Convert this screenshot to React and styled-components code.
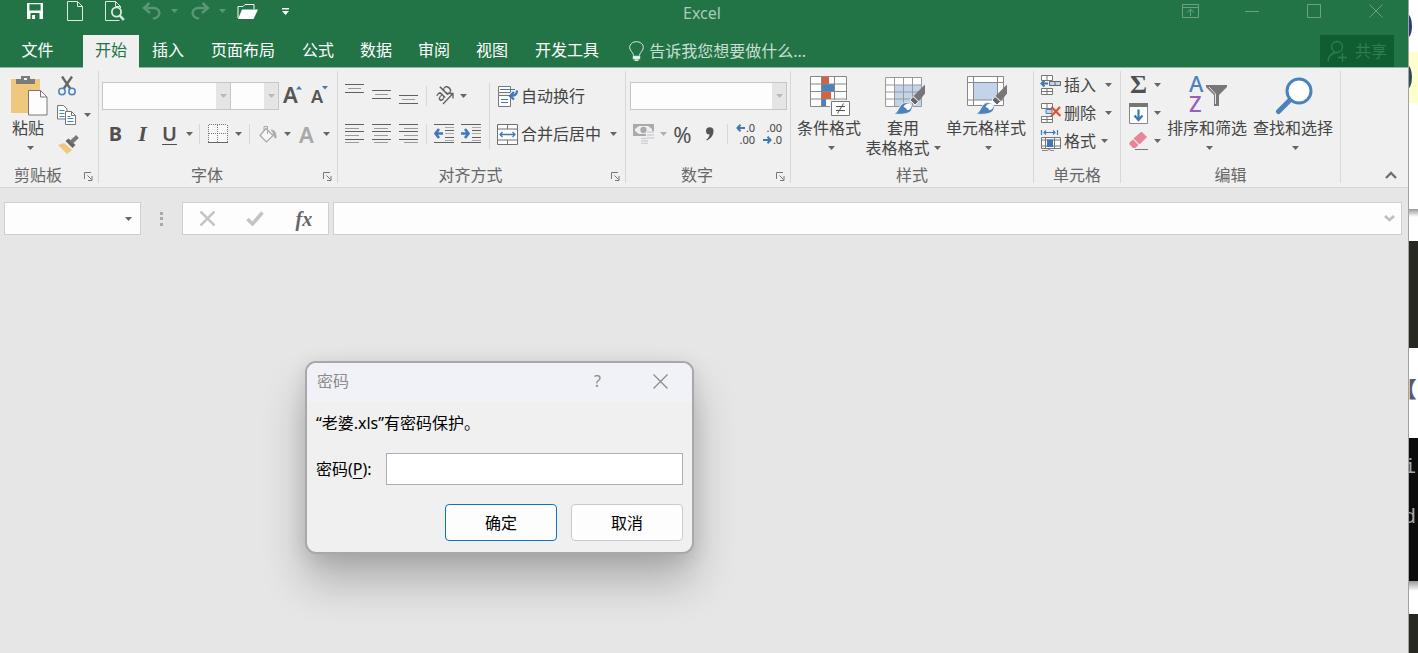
import React from "react";
import styled, { createGlobalStyle, css } from "styled-components";

const FONT = '"Noto Sans", "Noto Sans CJK SC", sans-serif';

const Global = createGlobalStyle`
  *, *::before, *::after { box-sizing: border-box; }
  body { margin: 0; overflow: hidden; font-family: ${FONT}; font-size: 16px; line-height: 20px; color: #444; background: #fff; }
  button, input { font: inherit; color: inherit; }
  svg { display: block; flex: none; }
`;

const Desktop = styled.div`
  position: relative;
  display: flex;
  min-height: 100vh;
`;

const Window = styled.div`
  flex: 1;
  min-width: 0;
  display: flex;
  flex-direction: column;
  background: #e6e6e6;
  border-right: 1px solid #a3a3a3;
`;

const PlainButton = styled.button`
  display: flex;
  align-items: center;
  justify-content: center;
  padding: 0;
  border: 0;
  background: none;
  white-space: nowrap;
`;

/* ---------- title bar and tabs ---------- */

const Header = styled.header`
  background: #227447;
  color: #fff;
  border-bottom: 1px solid #8fb8a0;
`;

const TitleBar = styled.div`
  display: grid;
  grid-template-columns: 1fr auto 1fr;
  height: 35px;
`;

const QuickAccess = styled.div`
  display: flex;
  height: 24px;
  padding-left: 15px;
`;

const QuickButton = styled(PlainButton)`
  width: ${(p) => p.$w || 40}px;
  height: 22px;
  color: #fff;
  opacity: ${(p) => (p.$dim ? 0.25 : 1)};
`;

const UndoPair = styled.div`
  display: flex;
  margin-right: ${(p) => p.$gap || 0}px;
`;

const AppTitle = styled.h1`
  margin: 0;
  padding-right: 4px;
  font-size: 16px;
  font-weight: 400;
  line-height: 26px;
  color: #a9cbb7;
`;

const WindowControls = styled.div`
  display: flex;
  justify-content: flex-end;
  padding-right: 1px;
`;

const ControlButton = styled(PlainButton)`
  width: 62px;
  height: 22px;
  color: #6ba284;
`;

const TabRow = styled.nav`
  display: flex;
  height: 32px;
`;

const Tab = styled(PlainButton)`
  padding: 0 ${(p) => (p.$wide ? 14 : 13)}px 2px;
  color: #fff;
  ${(p) => p.$file && css`width: 75px; margin-right: 8px;`}
  ${(p) => p.$active && css`
    padding: 0 12px 3px;
    color: #227447;
    background: #f0f0f0;
    margin-bottom: -1px;
  `}
`;

const TellMe = styled(PlainButton)`
  margin-left: 16px;
  gap: 5px;
  color: #c9dfd2;
`;

const Share = styled(PlainButton)`
  width: 74px;
  gap: 7px;
  margin-left: auto;
  margin-right: 14px;
  color: #2c7f54;
  background: #105d31;
`;

/* ---------- ribbon ---------- */

const Ribbon = styled.section`
  display: flex;
  padding: 3px 0 4px;
  background: #f0f0f0;
  border-bottom: 1px solid #d4d4d4;
`;

const GroupBox = styled.div`
  display: flex;
  flex-direction: column;
  flex: none;
  width: ${(p) => p.$w}px;
  border-right: 1px solid #d8d8d8;
`;

const GroupBody = styled.div`
  display: flex;
  height: 94px;
  padding-left: ${(p) => p.$pad || 0}px;
`;

const GroupFoot = styled.div`
  display: flex;
  align-items: center;
  height: 20px;
  margin-bottom: -2px;
  color: #666;
`;

const GroupName = styled.span`
  flex: 1;
  text-align: center;
`;

const Launcher = styled(PlainButton)`
  width: 22px;
  height: 20px;
  padding: 2px 0 0 2px;
`;

const BigButton = styled.button`
  display: flex;
  flex-direction: column;
  align-items: center;
  width: ${(p) => p.$w}px;
  padding: 3px 0 0;
  border: 0;
  background: none;
  white-space: nowrap;
`;

const BigIcon = styled.span`
  display: flex;
  align-items: center;
  height: 44px;
  padding-left: ${(p) => (p.$single ? 2 : 0)}px;
`;

const BigLine = styled.span`
  display: flex;
  align-items: center;
  justify-content: center;
  gap: 4px;
  height: 20px;
  padding-left: ${(p) => (p.$single ? 4 : 0)}px;
  padding-right: ${(p) => (p.$shift ? 4 : 0)}px;
`;

const Stack = styled.div`
  display: flex;
  flex-direction: column;
  padding-top: ${(p) => p.$top || 0}px;
  gap: ${(p) => p.$gap || 0}px;
`;

const Row = styled.div`
  display: flex;
  align-items: center;
  height: 28px;
`;

const Tool = styled(PlainButton)`
  width: ${(p) => p.$w || 27}px;
  height: 28px;
`;

const TextTool = styled(PlainButton)`
  justify-content: flex-start;
  height: 28px;
  gap: 3px;
  padding-left: ${(p) => p.$pad || 0}px;
`;

const ToolLabel = styled.span`
  margin-right: ${(p) => p.$gap || 0}px;
`;

const Letter = styled.span`
  font-size: ${(p) => p.$size || 20}px;
  line-height: 28px;
  font-weight: ${(p) => p.$weight || 700};
  font-style: ${(p) => (p.$italic ? "italic" : "normal")};
  font-family: ${(p) => (p.$serif ? '"Liberation Serif", serif' : FONT)};
  color: ${(p) => p.$color || "#505050"};
  text-decoration: ${(p) => (p.$under ? "underline" : "none")};
  text-decoration-thickness: 1px;
  text-underline-offset: 3px;
`;

const Divider = styled.span`
  width: 1px;
  height: ${(p) => p.$h || 20}px;
  margin: ${(p) => p.$m || "0 4px"};
  background: #d8d8d8;
`;

const ComboBox = styled.div`
  display: flex;
  width: ${(p) => p.$w}px;
  height: 28px;
  margin-left: ${(p) => (p.$joined ? -1 : 0)}px;
  border: 1px solid #c6c6c6;
  background: #fdfdfd;
`;

const ComboInput = styled.input`
  flex: 1;
  min-width: 0;
  padding: 0 4px;
  border: 0;
  outline: 0;
  background: transparent;
`;

const ComboArrow = styled(PlainButton)`
  width: 14px;
  background: #e5e5e5;
`;

const Collapse = styled(PlainButton)`
  align-self: flex-end;
  width: 34px;
  height: 16px;
  margin-left: auto;
`;

/* ---------- formula bar ---------- */

const FormulaBar = styled.div`
  display: flex;
  align-items: stretch;
  height: 47px;
  padding: 14px 6px 0 4px;
`;

const Field = styled.div`
  display: flex;
  align-items: center;
  width: ${(p) => (p.$w ? `${p.$w}px` : "auto")};
  flex: ${(p) => (p.$w ? "none" : 1)};
  min-width: 0;
  background: #fdfdfd;
  border: 1px solid #cfcfcf;
`;

const Grip = styled.span`
  display: flex;
  align-items: center;
  justify-content: center;
  width: 41px;
`;

const FormulaTool = styled(PlainButton)`
  width: 49px;
  height: 31px;
`;

const FieldArrow = styled(PlainButton)`
  width: 24px;
  height: 31px;
`;

const Spacer = styled.span`
  width: 4px;
`;

/* ---------- password dialog ---------- */

const Dialog = styled.form`
  position: absolute;
  left: 305px;
  top: 361px;
  width: 389px;
  border: 2px solid #a8a8a8;
  border-radius: 11px;
  overflow: hidden;
  background: #f0f0f0;
  color: #000;
  box-shadow: 0 28px 44px rgba(0, 0, 0, 0.24), 0 4px 20px rgba(0, 0, 0, 0.1);
`;

const DialogTitle = styled.div`
  display: flex;
  height: 39px;
  padding-left: 10px;
  background: #f1f2f7;
  color: #8c8c8c;
`;

const DialogName = styled.h2`
  flex: 1;
  margin: 0;
  font-size: 16px;
  font-weight: 400;
  line-height: 36px;
`;

const DialogControl = styled(PlainButton)`
  width: 63px;
  height: 36px;
  color: #8c8c8c;
`;

const DialogBody = styled.div`
  padding: 11px 9px 11px 9px;
`;

const Message = styled.p`
  margin: 0 0 20px;
  line-height: 20px;
`;

const PasswordRow = styled.div`
  display: flex;
  align-items: center;
  height: 32px;
`;

const PasswordLabel = styled.label`
  width: 70px;
  u { text-underline-offset: 3px; }
`;

const PasswordInput = styled.input`
  flex: 1;
  min-width: 0;
  height: 32px;
  padding: 0 8px;
  border: 1px solid #abadb8;
  background: #fff;
  outline: 0;
`;

const DialogActions = styled.div`
  display: flex;
  justify-content: flex-end;
  gap: 14px;
  padding-top: 19px;
`;

const DialogButton = styled.button`
  width: 112px;
  height: 37px;
  padding: 0;
  border: 1px solid ${(p) => (p.$primary ? "#0a74c9" : "#c6cbd2")};
  border-radius: 4px;
  background: #fdfdfd;
`;

/* ---------- slice of the windows behind ---------- */

const Behind = styled.aside`
  display: flex;
  flex-direction: column;
  width: 9px;
  flex: none;
  overflow: hidden;
  background: #fff;
`;

const Slice = styled.div`
  height: ${(p) => p.$h}px;
  flex: none;
  background: ${(p) => p.$bg || "#fff"};
  color: ${(p) => p.$color || "#a8a8a8"};
  white-space: nowrap;
  overflow: hidden;
`;

const Mono = styled.div`
  display: flex;
  flex-direction: column;
  align-items: flex-end;
  padding: 5px 2px 0 0;
  font-family: "Liberation Mono", monospace;
  font-size: 20px;
  line-height: 50px;
`;

const Bracket = styled.div`
  display: flex;
  justify-content: flex-end;
  padding: 28px 1px 0 0;
  font-size: 22px;
  line-height: 24px;
`;

/* ---------- icons ---------- */

const Svg = ({ w, h, children, ...rest }) => (
  <svg width={w} height={h} viewBox={`0 0 ${w} ${h}`} fill="none" aria-hidden="true" {...rest}>
    {children}
  </svg>
);

const Caret = ({ color = "#666" }) => (
  <Svg w={7} h={4}><path d="M0 0h7L3.5 4z" fill={color} /></Svg>
);

const SaveIcon = () => (
  <Svg w={18} h={18}>
    <path fillRule="evenodd" fill="#fff" d="M1 1h16v16H1zM3.4 2.3v6.2h11.2V2.3zM4.5 11v6h1.6v-4h3v4h4.4v-6z" />
  </Svg>
);
const NewIcon = () => (
  <Svg w={16} h={20} stroke="#dbe9e1"><path d="M.5.5h10l5 5v14H.5zM10.5 .5v5h5" /></Svg>
);
const PreviewIcon = () => (
  <Svg w={20} h={20} stroke="#dbe9e1">
    <path d="M15.5 7V5.5l-5-5H.5v19h14M10.5 .5v5h5" />
    <circle cx="11.5" cy="11" r="4.6" strokeWidth="1.8" fill="#227447" />
    <path d="M14.8 14.5l4 4.5" strokeWidth="2.6" />
  </Svg>
);
const UndoIcon = ({ flip }) => (
  <Svg w={20} h={18} stroke="#fff">
    <g transform={flip ? "translate(20 0) scale(-1 1)" : undefined} strokeWidth="2.4">
      <path d="M7.5 1L2 6l6 5" />
      <path d="M2 6h9.500c8 0 8 10-.5 10.500" />
    </g>
  </Svg>
);
const FolderIcon = () => (
  <Svg w={21} h={17}>
    <path d="M1 15V3.500h5l2-2h9V6" stroke="#fff" />
    <path d="M5 6.500h16L16.500 16H1z" fill="#fff" />
  </Svg>
);
const MoreIcon = () => (
  <Svg w={7} h={7}><path d="M0 0h7v1.500H0zM0 3h7L3.500 7z" fill="#fff" /></Svg>
);
const RibbonOptions = () => (
  <Svg w={17} h={14} stroke="currentColor"><path d="M.5 .5h16v13H.5zM.5 3.500h16M8.500 12V5.500M5 8.500l3.500-3.300L12 8.500" /></Svg>
);
const BulbIcon = () => (
  <Svg w={15} h={20} stroke="#dcebe2">
    <path d="M4.500 14.500c0-3-3.800-4.500-3.800-8C.7 3 3.700.7 7.500.7s6.800 2.300 6.800 5.800c0 3.500-3.800 5-3.800 8" />
    <path d="M4.500 15.500h6v2h-6zM5.500 19.300h4" strokeWidth="1.400" fill="#fff" />
  </Svg>
);
const PersonIcon = () => (
  <Svg w={21} h={22} stroke="currentColor" strokeWidth="1.3">
    <circle cx="10" cy="7" r="5.5" />
    <path d="M1 22c0-5 3-8.500 7.500-9.500M15.500 13v9M11 17.500h9" />
  </Svg>
);

const PasteIcon = () => (
  <Svg w={38} h={42}>
    <path d="M1 4h29v34H1z" fill="#efc77d" />
    <path d="M6 4h5V1h9v3h5v5H6z" fill="#7b7b7b" /><path d="M14 3h3v2h-3z" fill="#f0f0f0" />
    <path d="M18.500 15.500h12l6.500 6.500v18H18.500z" fill="#fdfdfd" stroke="#777" />
    <path d="M30.500 15.500V22H37" stroke="#777" />
  </Svg>
);
const CutIcon = () => (
  <Svg w={18} h={20}>
    <path d="M4 .5l8.500 12.500M14 .5L5.500 13" stroke="#666" strokeWidth="2.4" />
    <circle cx="4" cy="15.500" r="3.200" stroke="#4a82bd" strokeWidth="1.5" />
    <circle cx="14" cy="15.500" r="3.200" stroke="#4a82bd" strokeWidth="1.5" />
  </Svg>
);
const CopyIcon = () => (
  <Svg w={20} h={20}>
    <path d="M.5 .5h6l3.500 3.500v10H.5z" fill="#fff" stroke="#777" />
    <path d="M2.500 5.500h5M2.500 8.500h5M2.500 11.500h5" stroke="#4a82bd" />
    <path d="M8.500 6.500h6l4 4v9h-10z" fill="#fff" stroke="#777" />
    <path d="M14.500 6.500v4h4" stroke="#777" /><path d="M10.500 11.500h3M10.500 13.500h6M10.500 16.500h6" stroke="#4a82bd" />
  </Svg>
);
const BrushIcon = () => (
  <Svg w={21} h={19}>
    <path d="M0 10l6-2 8 7-5 4z" fill="#efc77d" />
    <path d="M7.500 6l3-2.500 7 6.500-3 3z" fill="#666" />
    <path d="M13 7.500L19.500 1.500" stroke="#777" strokeWidth="4" />
  </Svg>
);

const SvgLetter = styled.text`
  font-family: ${(p) => (p.$serif ? '"Liberation Serif", serif' : FONT)};
  font-size: ${(p) => p.$size}px;
  font-weight: ${(p) => p.$weight || 400};
  fill: ${(p) => p.$color || "#555"};
`;

const GrowFont = ({ down }) => (
  <Svg w={20} h={24}>
    <SvgLetter x={down ? 3 : 1} y="19" $size={down ? 18 : 22} $weight={600}>A</SvgLetter>
    <path d={down ? "M14 2h6l-3 3.500z" : "M14 5.500h6L17 2z"} fill="#3f78b5" />
  </Svg>
);
const BorderIcon = () => (
  <Svg w={20} h={20}>
    <path d="M1 1h18v17H1z" fill="#fafafa" />
    <path d="M1 .5h18M.5 1v17M9.500 1v17M19.500 1v17M1 9.500h18" stroke="#777" strokeDasharray="1 1" />
    <path d="M0 18.500h20" stroke="#666" />
  </Svg>
);
const FillIcon = () => (
  <Svg w={18} h={18} stroke="#a8a8a8">
    <path d="M7 3.500l7 7-6.500 6.500L1 10.500z" fill="#f8f4fa" strokeWidth="1.2" />
    <path d="M5 6V1.500h3.500V9" />
    <path d="M12 5c4 0 5 3 5 8-2 0-2-3-3-5" fill="#aaa" />
  </Svg>
);

const Lines = ({ rows, w = 19, h = 20 }) => (
  <Svg w={w} h={h}>
    {rows.map(([x, y, len], i) => (
      <path key={i} d={`M${x} ${y + 0.5}h${len}`} stroke={i % 2 ? "#9a9a9a" : "#606060"} />
    ))}
  </Svg>
);
const topRows = (y) => [[0, y, 19], [3, y + 4, 13], [0, y + 8, 19]];
const justify = (side) =>
  [0, 4, 7, 11, 15, 18].map((y, i) => {
    const len = i % 2 ? 14 : 19;
    return [side === "left" ? 0 : side === "right" ? 19 - len : (19 - len) >> 1, y, len];
  });

const OrientIcon = () => (
  <Svg w={20} h={20}>
    <SvgLetter x="3" y="14" $size={15} transform="rotate(-45 7 12)">ab</SvgLetter>
    <path d="M8 18l9.500-10M13 7.500h5v5" stroke="#606060" strokeWidth="1.3" />
  </Svg>
);
const IndentIcon = ({ right }) => (
  <Svg w={21} h={20}>
    <path d="M0 .5h20M0 18.500h20M11 6.500h9M11 13.500h9" stroke="#606060" />
    <path d="M11 3.500h9M11 9.500h9M11 16.500h9" stroke="#aaa" />
    <path transform={right ? "translate(9 0) scale(-1 1)" : undefined} d="M5 5L1.500 9.500 5 14M2 9.500h7" stroke="#3f78b5" strokeWidth="2.6" />
  </Svg>
);
const WrapIcon = () => (
  <Svg w={21} h={21}>
    <path d="M1.500 .5h12v6h-12zM1.500 9.500h12v11h-12zM1.500 6.500v3" fill="#fdfdfd" stroke="#777" />
    <path d="M3 3.500h13M4 13.500h7M4 16.500h7" stroke="#3f78b5" />
    <path d="M15 3.500h3" stroke="#3f78b5" />
    <path d="M20 4.500c0 4-2 5.500-6 5.500M17 6L13 10l4 3.500" stroke="#3f78b5" strokeWidth="2.2" />
  </Svg>
);
const MergeIcon = () => (
  <Svg w={21} h={21}>
    <path d="M.5 .5h20v20H.5zM.5 5h20M.5 16h20M10.500 .5V5M10.500 16v4.500" fill="#fdfdfd" stroke="#707070" />
    <path d="M3 10.500h15M5.500 8L3 10.500 5.500 13M15.500 8l2.500 2.500-2.500 2.500" stroke="#3f78b5" strokeWidth="1.3" />
  </Svg>
);
const MoneyIcon = () => (
  <Svg w={22} h={20}>
    <path d="M1 1h19v10H1z" stroke="#aaa" strokeWidth="2" fill="#efefef" />
    <path d="M2 2h4L2 5zM19 2h-4l4 3zM2 10h4L2 7z" fill="#aaa" />
    <circle cx="10.500" cy="6" r="3.200" fill="#aaa" />
    <path d="M13 7h8v10h-6v3H7v-7h6z" fill="#f0f0f0" />
    <path d="M14 8h7M14 11h7M14 14h7M8 14.500h6M8 17h7M8 19.500h7" stroke="#d3ced6" strokeWidth="1.6" />
  </Svg>
);

const Decimals = styled.span`
  display: flex;
  flex-direction: column;
  align-items: flex-end;
  font-size: 11px;
  line-height: 12px;
  color: #444;
`;
const DecimalRow = styled.span`
  display: flex;
  align-items: center;
  gap: 1px;
`;
const SmallArrow = ({ right }) => (
  <Svg w={9} h={8}>
    <path transform={right ? "translate(9 0) scale(-1 1)" : undefined} d="M4.500 .8L1.500 4l3 3.200M1.500 4H9" stroke="#3f78b5" strokeWidth="2" />
  </Svg>
);

const CondIcon = () => (
  <Svg w={40} h={40}>
    <path d="M.5 .5h36v30H.5z" fill="#fdfdfd" />
    <path d="M12 1h7v7h-7zM12 16h9v7h-9z" fill="#d95f3f" /><path d="M12 8h12v7H12zM12 23h4v7h-4z" fill="#4a82bd" />
    <path d="M.5 .5h36v30H.5zM.5 8h36M.5 15.500h36M.5 23h36M11.500 .5v30M24.500 .5v30" stroke="#888" />
    <path d="M20 24h20v16H20z" fill="#f0f0f0" />
    <path d="M21.500 25.500h18v14h-18z" fill="#fdfdfd" stroke="#777" />
    <path d="M26 30.500h9M26 34.500h9M33.500 27.500l-6 10" stroke="#555" />
  </Svg>
);
const StyleBrush = () => (
  <>
    <path d="M40 8.500v9L34 25l-5.500-5z" fill="#777" />
    <path d="M28 20.500l5.500 5-3.500 3.500-5-5z" fill="#666" stroke="#f0f0f0" />
    <path d="M9 38c5-2 4.500-9 9.500-11 5-1.500 9.500 2 8.500 6-1.500 5-10 6-18 5z" fill="#4a82bd" stroke="#f0f0f0" />
    <path d="M18.500 31c1-4 7-4.500 7.500-1 .5 3-2 4.500-4 4-.5-2-2-2.500-3.500-3z" fill="#fdfdfd" />
  </>
);
const TableStyleIcon = () => (
  <Svg w={40} h={40}>
    <path d="M.5 1.500h36v29H.5z" fill="#fdfdfd" /><path d="M10 9h27v22H10z" fill="#c1d4e9" />
    <path d="M.5 1.500h36v29H.5zM.5 9h36M.5 16h36M.5 23h36M9.500 1.500v29M18.500 1.500v29M27.500 1.500v29" stroke="#999" />
    <StyleBrush />
  </Svg>
);
const CellStyleIcon = () => (
  <Svg w={40} h={40}>
    <path d="M.5 .5h36v29H.5z" fill="#fdfdfd" /><path d="M7 7h23v17H7z" fill="#c1d4e9" />
    <path d="M.5 .5h36v29H.5zM.5 6.500h36M.5 24h36M6.500 .5v29M30.500 .5v29" stroke="#888" />
    <StyleBrush />
  </Svg>
);

const CellGrid = () => (
  <path d="M1.500 .5h11v5h-11zM7 .5v5M1.500 13.500h11v6h-11zM1.500 16.500h11M7 13.500v6" stroke="#777" fill="#fdfdfd" />
);
const InsertIcon = () => (
  <Svg w={21} h={20}>
    <CellGrid />
    <path d="M9.500 6.500h11v4h-11zM15 6.500v4" fill="#c1d4e9" stroke="#666" />
    <path d="M4.500 5.500L1.500 8.500l3 3M2 8.500h6" stroke="#3f78b5" strokeWidth="2" />
  </Svg>
);
const DeleteIcon = () => (
  <Svg w={21} h={20}>
    <CellGrid />
    <path d="M6 6.500h6v4H6z" fill="#c1d4e9" stroke="#4a82bd" />
    <path d="M11.500 4l9 9M20 4l-9 9.500" stroke="#d8542f" strokeWidth="2.2" />
  </Svg>
);
const FormatIcon = () => (
  <Svg w={21} h={22}>
    <path d="M1.500 0v5M17.500 0v5M4 2.500h11M6 .5l-2 2 2 2M13 .5l2 2-2 2" stroke="#3f78b5" strokeWidth="1.2" />
    <path d="M1.500 7.500h19v11h-19zM1.500 10h19M1.500 16h19M5.500 7.500v11M14.500 7.500v11" fill="#fdfdfd" stroke="#777" />
    <path d="M7 9.500h6V17H7z" fill="#3f78b5" /><path d="M2 20.500h5l2-1 2 1h3" stroke="#888" />
  </Svg>
);

const FillDownIcon = () => (
  <Svg w={19} h={21}>
    <path d="M.5 .5h18v20H.5z" fill="#fdfdfd" stroke="#888" /><path d="M0 0h19v4H0z" fill="#777" />
    <path d="M9.500 6.500v10M5.500 12.500l4 4.500 4-4.500" stroke="#3f78b5" strokeWidth="2.2" />
  </Svg>
);
const EraserIcon = () => (
  <Svg w={20} h={18}>
    <path d="M12.500 0l5 5-7 7L5 6.500z" fill="#e8839a" stroke="#e8839a" />
    <path d="M4 7.500l5.500 5.500-3 3H4L.5 12.500v-2z" fill="#e8839a" />
    <path d="M6 17.500h13" stroke="#777" />
  </Svg>
);
const SortIcon = () => (
  <Svg w={40} h={40}>
    <SvgLetter x="1" y="16" $size={22} $weight={500} $color="#4a82bd">A</SvgLetter>
    <SvgLetter x="1" y="36" $size={22} $weight={500} $color="#9a5fb8">Z</SvgLetter>
    <path d="M18 9h21v2l-8 8v11h-5V19l-8-8z" fill="#777" /><path d="M21 11l6.500 7v10" stroke="#e8e8e8" />
  </Svg>
);
const FindIcon = () => (
  <Svg w={38} h={38}>
    <path d="M15 23L3.500 34.500" stroke="#4a82bd" strokeWidth="5" strokeLinecap="round" />
    <circle cx="24" cy="14" r="12" fill="#fff" stroke="#4a82bd" strokeWidth="3" />
  </Svg>
);
const LauncherIcon = () => (
  <Svg w={9} h={9} stroke="#777"><path d="M.5 7V.5H7M3.500 3.500l4 4M8 4v4.500H4" /></Svg>
);
const CrossIcon = ({ size = 14, color = "currentColor", width = 1 }) => (
  <Svg w={size} h={size}><path d={`M.5 .5l${size - 1} ${size - 1}M${size - 0.5} .5l-${size - 1} ${size - 1}`} stroke={color} strokeWidth={width} /></Svg>
);

/* ---------- composed parts ---------- */

const Drop = ({ w = 10, color, label }) => (
  <Tool $w={w} type="button" aria-label={label}><Caret color={color} /></Tool>
);

const Group = ({ name, w, pad, launcher, children }) => (
  <GroupBox $w={w}>
    <GroupBody $pad={pad}>{children}</GroupBody>
    <GroupFoot>
      <GroupName>{name}</GroupName>
      {launcher && <Launcher type="button" aria-label={`${name}设置`}><LauncherIcon /></Launcher>}
    </GroupFoot>
  </GroupBox>
);

const Big = ({ w, icon, label, second }) => (
  <BigButton $w={w} type="button">
    <BigIcon $single={!second}>{icon}</BigIcon>
    <BigLine $shift={!!second}>{label}</BigLine>
    <BigLine $single={!second} $shift={!!second}>{second}<Caret /></BigLine>
  </BigButton>
);

const Combo = ({ w, joined, label }) => (
  <ComboBox $w={w} $joined={joined}>
    <ComboInput aria-label={label} />
    <ComboArrow type="button" aria-label={`${label}列表`}><Caret color="#b8b8b8" /></ComboArrow>
  </ComboBox>
);

const TABS = ["插入", "页面布局", "公式", "数据", "审阅", "视图", "开发工具"];

function TopBar() {
  return (
    <Header>
      <TitleBar>
        <QuickAccess>
          <QuickButton aria-label="保存"><SaveIcon /></QuickButton>
          <QuickButton aria-label="新建"><NewIcon /></QuickButton>
          <QuickButton aria-label="打印预览"><PreviewIcon /></QuickButton>
          <UndoPair $gap={4}>
            <QuickButton $w={34} $dim aria-label="撤消"><UndoIcon /></QuickButton>
            <QuickButton $w={10} $dim aria-label="撤消列表"><Caret color="#fff" /></QuickButton>
          </UndoPair>
          <UndoPair>
            <QuickButton $w={34} $dim aria-label="恢复"><UndoIcon flip /></QuickButton>
            <QuickButton $w={10} $dim aria-label="恢复列表"><Caret color="#fff" /></QuickButton>
          </UndoPair>
          <QuickButton aria-label="打开"><FolderIcon /></QuickButton>
          <QuickButton $w={36} aria-label="自定义快速访问工具栏"><MoreIcon /></QuickButton>
        </QuickAccess>
        <AppTitle>Excel</AppTitle>
        <WindowControls>
          <ControlButton aria-label="功能区显示选项"><RibbonOptions /></ControlButton>
          <ControlButton aria-label="最小化"><Svg w={14} h={2}><path d="M0 1.500h14" stroke="currentColor" /></Svg></ControlButton>
          <ControlButton aria-label="最大化"><Svg w={14} h={14}><path d="M.5 .5h13v13H.5z" stroke="currentColor" /></Svg></ControlButton>
          <ControlButton aria-label="关闭"><CrossIcon /></ControlButton>
        </WindowControls>
      </TitleBar>
      <TabRow>
        <Tab $file>文件</Tab>
        <Tab $active>开始</Tab>
        {TABS.map((t) => <Tab key={t} $wide={t.length > 2}>{t}</Tab>)}
        <TellMe><BulbIcon />告诉我您想要做什么...</TellMe>
        <Share><PersonIcon />共享</Share>
      </TabRow>
    </Header>
  );
}

function RibbonBar() {
  return (
    <Ribbon>
      <Group name="剪贴板" w={99} launcher>
        <Big w={56} icon={<PasteIcon />} label="粘贴" />
        <Stack $top={1} $gap={1}>
          <Row><Tool $w={22} aria-label="剪切"><CutIcon /></Tool></Row>
          <Row><Tool $w={22} aria-label="复制"><CopyIcon /></Tool><Drop w={18} label="复制选项" /></Row>
          <Row><Tool $w={24} aria-label="格式刷"><BrushIcon /></Tool></Row>
        </Stack>
      </Group>

      <Group name="字体" w={239} pad={3} launcher>
        <Stack $top={11} $gap={10}>
          <Row>
            <Combo w={129} label="字体" />
            <Combo w={49} joined label="字号" />
            <Tool $w={26} aria-label="增大字号"><GrowFont /></Tool>
            <Tool $w={26} aria-label="减小字号"><GrowFont down /></Tool>
          </Row>
          <Row>
            <Tool aria-label="加粗"><Letter>B</Letter></Tool>
            <Tool aria-label="倾斜"><Letter $serif $italic $size={22}>I</Letter></Tool>
            <Tool aria-label="下划线"><Letter $under $weight={600}>U</Letter></Tool>
            <Drop w={12} label="下划线选项" />
            <Divider />
            <Tool aria-label="边框"><BorderIcon /></Tool>
            <Drop w={14} label="边框选项" />
            <Divider />
            <Tool aria-label="填充颜色"><FillIcon /></Tool>
            <Drop w={12} label="填充颜色选项" />
            <Tool aria-label="字体颜色"><Letter $color="#a8a8a8" $weight={600} $size={22}>A</Letter></Tool>
            <Drop w={12} label="字体颜色选项" />
          </Row>
        </Stack>
      </Group>

      <Group name="对齐方式" w={288} pad={3} launcher>
        <Stack $top={11} $gap={10}>
          <Row>
            <Tool aria-label="顶端对齐"><Lines h={24} rows={topRows(0)} /></Tool>
            <Tool aria-label="垂直居中"><Lines h={24} rows={topRows(6)} /></Tool>
            <Tool aria-label="底端对齐"><Lines h={24} rows={topRows(11)} /></Tool>
            <Divider />
            <Tool aria-label="方向"><OrientIcon /></Tool>
            <Drop label="方向选项" />
          </Row>
          <Row>
            <Tool aria-label="左对齐"><Lines rows={justify("left")} /></Tool>
            <Tool aria-label="居中"><Lines rows={justify("center")} /></Tool>
            <Tool aria-label="右对齐"><Lines rows={justify("right")} /></Tool>
            <Divider />
            <Tool aria-label="减少缩进量"><IndentIcon /></Tool>
            <Tool aria-label="增加缩进量"><IndentIcon right /></Tool>
          </Row>
        </Stack>
        <Divider $h={66} $m="12px 4px 0" />
        <Stack $top={11} $gap={10}>
          <TextTool $pad={3}><WrapIcon />自动换行</TextTool>
          <TextTool $pad={3}><MergeIcon /><ToolLabel $gap={6}>合并后居中</ToolLabel><Caret /></TextTool>
        </Stack>
      </Group>

      <Group name="数字" w={165} pad={4} launcher>
        <Stack $top={11} $gap={10}>
          <Row><Combo w={157} label="数字格式" /></Row>
          <Row>
            <Tool aria-label="会计数字格式"><MoneyIcon /></Tool>
            <Drop w={12} color="#b0b0b0" label="会计格式选项" />
            <Tool aria-label="百分比样式"><Letter $weight={400} $size={22}>%</Letter></Tool>
            <Tool aria-label="千位分隔样式">
              <Svg w={9} h={14}><path d="M1 4a3.500 3.500 0 0 1 7.500 0c0 4-2 7-6.500 9.500l-.8-.8C3.500 11 4.500 9 4.500 7.500A3.500 3.500 0 0 1 1 4z" fill="#555" /></Svg>
            </Tool>
            <Divider />
            <Tool aria-label="增加小数位数">
              <Decimals><DecimalRow><SmallArrow />.0</DecimalRow><DecimalRow>.00</DecimalRow></Decimals>
            </Tool>
            <Tool aria-label="减少小数位数">
              <Decimals><DecimalRow>.00</DecimalRow><DecimalRow><SmallArrow right />.0</DecimalRow></Decimals>
            </Tool>
          </Row>
        </Stack>
      </Group>

      <Group name="样式" w={243} pad={1}>
        <Big w={74} icon={<CondIcon />} label="条件格式" />
        <Big w={78} icon={<TableStyleIcon />} label="套用" second="表格格式" />
        <Big w={84} icon={<CellStyleIcon />} label="单元格样式" />
      </Group>

      <Group name="单元格" w={87} pad={6}>
        <Stack>
          <TextTool><InsertIcon /><ToolLabel $gap={6}>插入</ToolLabel><Caret /></TextTool>
          <TextTool><DeleteIcon /><ToolLabel $gap={6}>删除</ToolLabel><Caret /></TextTool>
          <TextTool><FormatIcon /><ToolLabel $gap={2}>格式</ToolLabel><Caret /></TextTool>
        </Stack>
      </Group>

      <Group name="编辑" w={220} pad={4}>
        <Stack>
          <Row><Tool aria-label="自动求和"><Letter $serif $size={26}>Σ</Letter></Tool><Drop label="求和选项" /></Row>
          <Row><Tool aria-label="填充"><FillDownIcon /></Tool><Drop label="填充选项" /></Row>
          <Row><Tool aria-label="清除"><EraserIcon /></Tool><Drop label="清除选项" /></Row>
        </Stack>
        <Big w={90} icon={<SortIcon />} label="排序和筛选" />
        <Big w={82} icon={<FindIcon />} label="查找和选择" />
      </Group>

      <Collapse aria-label="折叠功能区"><Svg w={12} h={8}><path d="M1 7l5-5 5 5" stroke="#707070" strokeWidth="2.4" /></Svg></Collapse>
    </Ribbon>
  );
}

function Formula() {
  return (
    <FormulaBar>
      <Field $w={137}>
        <ComboInput aria-label="名称框" />
        <FieldArrow aria-label="名称列表"><Caret /></FieldArrow>
      </Field>
      <Grip><Svg w={3} h={14}><path d="M0 0h3v3H0zM0 5h3v3H0zM0 11h3v3H0z" fill="#aaa" /></Svg></Grip>
      <Field $w={147}>
        <FormulaTool aria-label="取消输入"><CrossIcon size={15} color="#c4c4c4" width={2.5} /></FormulaTool>
        <FormulaTool aria-label="确认输入"><Svg w={18} h={15}><path d="M1.500 8l5 5L16.500 1.500" stroke="#c4c4c4" strokeWidth="3.5" /></Svg></FormulaTool>
        <FormulaTool aria-label="插入函数"><Letter $serif $italic $size={20} $color="#666">fx</Letter></FormulaTool>
      </Field>
      <Spacer />
      <Field>
        <ComboInput aria-label="编辑栏" />
        <FieldArrow aria-label="展开编辑栏"><Svg w={11} h={7}><path d="M1 1l4.500 4L10 1" stroke="#c0c0c0" strokeWidth="2.8" /></Svg></FieldArrow>
      </Field>
    </FormulaBar>
  );
}

function PasswordDialog() {
  return (
    <Dialog role="dialog" aria-label="密码" onSubmit={(e) => e.preventDefault()}>
      <DialogTitle>
        <DialogName>密码</DialogName>
        <DialogControl type="button" aria-label="帮助">?</DialogControl>
        <DialogControl type="button" aria-label="关闭"><CrossIcon size={15} width={1.3} /></DialogControl>
      </DialogTitle>
      <DialogBody>
        <Message>“老婆.xls”有密码保护。</Message>
        <PasswordRow>
          <PasswordLabel htmlFor="password">密码(<u>P</u>):</PasswordLabel>
          <PasswordInput id="password" type="password" />
        </PasswordRow>
        <DialogActions>
          <DialogButton $primary type="submit">确定</DialogButton>
          <DialogButton type="button">取消</DialogButton>
        </DialogActions>
      </DialogBody>
    </Dialog>
  );
}

export default function App() {
  return (
    <Desktop>
      <Global />
      <Window>
        <TopBar />
        <RibbonBar />
        <Formula />
      </Window>
      <Behind>
        <Slice $h={52}><Svg w={9} h={52}><ellipse cx="-2" cy="26" rx="5" ry="12" fill="#2b3a7b" /></Svg></Slice>
        <Slice $h={51} $bg="#ffffcc"><Svg w={9} h={51}><ellipse cx="-2" cy="25" rx="5" ry="12" fill="#2b4a5b" /></Svg></Slice>
        <Slice $h={106} />
        <Slice $h={8} $bg="linear-gradient(#999, #fff)" />
        <Slice $h={24} />
        <Slice $h={107} $bg="#272822" />
        <Slice $h={90} $color="#555b70"><Bracket>【</Bracket></Slice>
        <Slice $h={143} $bg="#0c0c0c"><Mono><span>i</span><span>d</span></Mono></Slice>
        <Slice $h={10} $bg="linear-gradient(#999, #fff)" />
        <Slice $h={23} />
        <Slice $h={39} $bg="#272822" />
      </Behind>
      <PasswordDialog />
    </Desktop>
  );
}
